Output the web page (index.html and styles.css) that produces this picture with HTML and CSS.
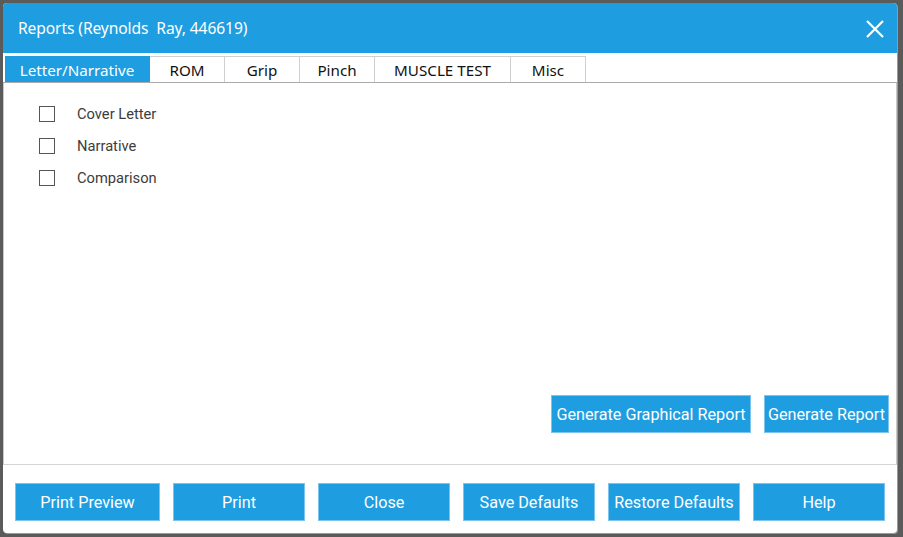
FILE: index.html
```html
<!DOCTYPE html>
<html>
<head>
<meta charset="utf-8">
<link rel="stylesheet" href="styles.css">
</head>
<body>
<div class="dialog">
  <div class="header">
    <span class="title">Reports (Reynolds&nbsp; Ray, 446619)</span>
    <svg class="close" width="20" height="20" viewBox="0 0 20 20"><path d="M2 2 L18 18 M18 2 L2 18" stroke="#fff" stroke-width="2.2" fill="none"/></svg>
  </div>
  <div class="tabs">
    <div class="tab active w145">Letter/Narrative</div>
    <div class="tab w75">ROM</div>
    <div class="tab w75">Grip</div>
    <div class="tab w75">Pinch</div>
    <div class="tab w136">MUSCLE TEST</div>
    <div class="tab w75">Misc</div>
  </div>
  <div class="content">
    <div class="checklist">
      <label class="row"><span class="box"></span><span>Cover Letter</span></label>
      <label class="row"><span class="box"></span><span>Narrative</span></label>
      <label class="row"><span class="box"></span><span>Comparison</span></label>
    </div>
    <div class="gen">
      <button class="btn gen-graph">Generate Graphical Report</button>
      <button class="btn gen-rep">Generate Report</button>
    </div>
  </div>
  <div class="footer">
    <button class="btn fbtn first">Print Preview</button>
    <button class="btn fbtn">Print</button>
    <button class="btn fbtn">Close</button>
    <button class="btn fbtn">Save Defaults</button>
    <button class="btn fbtn">Restore Defaults</button>
    <button class="btn fbtn">Help</button>
  </div>
</div>
</body>
</html>
```
FILE: styles.css
```css
html, body {
  margin: 0;
  padding: 0;
}
body {
  width: 903px;
  height: 537px;
  background-color: #5b5b5b;
  overflow: hidden;
  box-sizing: border-box;
  padding: 3px 0 0 3px;
}
.dialog {
  width: 894px;
  height: 530px;
  background: #fff;
  border-radius: 4px;
  overflow: hidden;
  display: flex;
  flex-direction: column;
  box-shadow: 1px 1px 0 #9a9a9a;
}
.header {
  height: 50px;
  flex: none;
  background: #1e9de0;
  display: flex;
  align-items: center;
  justify-content: space-between;
  padding: 0 12px 0 15px;
}
.title {
  color: #fff;
  font-family: "Noto Sans", "Open Sans", sans-serif;
  font-size: 15.6px;
  letter-spacing: -0.1px;
}
.close {
  display: block;
  margin-top: 1px;
}
.tabs {
  flex: none;
  display: flex;
  margin-top: 3px;
  padding-left: 2px;
  border-bottom: 1px solid #aaaaaa;
  height: 26px;
}
.tab {
  box-sizing: border-box;
  height: 26px;
  border: 1px solid #d0d0d0;
  border-bottom: none;
  border-left: none;
  display: flex;
  align-items: center;
  justify-content: center;
  font-family: "Noto Sans", "Open Sans", sans-serif;
  font-size: 15.2px;
  color: #111;
}
.tab.active {
  background: #1e9de0;
  border-color: #1e9de0;
  color: #fff;
}
.w145 { width: 145px; }
.w75 { width: 75px; }
.w136 { width: 136px; }
.content {
  flex: 1;
  display: flex;
  flex-direction: column;
  justify-content: space-between;
  border-bottom: 1px solid #d4d4d4;
  border-left: 1px solid #c8c8c8;
  border-right: 1px solid #c8c8c8;
  padding: 23px 7px 31px 35px;
}
.checklist {
  display: flex;
  flex-direction: column;
  gap: 16px;
}
.row {
  display: flex;
  align-items: center;
  height: 16px;
  font-family: Roboto, sans-serif;
  font-size: 14.7px;
  color: #3c3c3c;
}
.box {
  width: 14px;
  height: 14px;
  border: 1px solid #555;
  margin-right: 22px;
  background: #fff;
}
.gen {
  display: flex;
  justify-content: flex-end;
  gap: 13px;
}
.btn {
  box-sizing: border-box;
  height: 38px;
  background: #1e9de0;
  border: 1px solid #7cc4ee;
  color: #fff;
  font-family: Roboto, sans-serif;
  font-size: 16.2px;
  padding: 0;
  margin: 0;
  border-radius: 0;
}
.gen-graph { width: 200px; }
.gen-rep { width: 125px; }
.footer {
  flex: none;
  height: 68px;
  box-sizing: border-box;
  padding: 18px 0 0 12px;
  display: flex;
  gap: 13px;
  align-items: flex-start;
}
.fbtn { width: 132px; flex: none; }
.fbtn.first { width: 145px; }
```
